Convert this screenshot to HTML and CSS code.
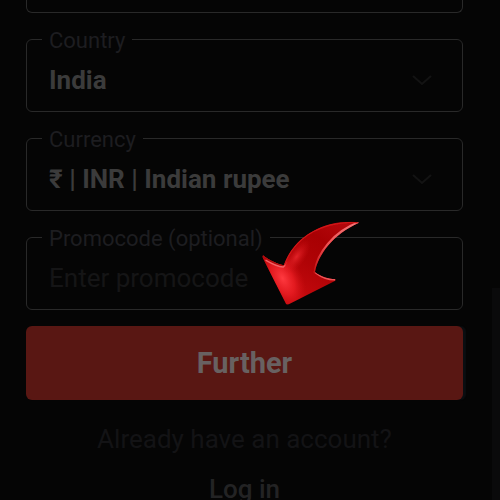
FILE: index.html
```html
<!DOCTYPE html>
<html lang="en">
<head>
<meta charset="utf-8">
<meta name="viewport" content="width=device-width, initial-scale=1">
<title>Registration</title>
<link rel="stylesheet" href="styles.css">
</head>
<body>
<main class="page">
  <form class="form">
    <div class="field-end"></div>
    <fieldset class="field">
      <legend><label for="country">Country</label></legend>
      <div class="control">
        <select id="country"><option>India</option></select>
        <svg class="chevron" viewBox="0 0 20 12" aria-hidden="true"><path d="M1 2l9 8 9-8"/></svg>
      </div>
    </fieldset>
    <fieldset class="field">
      <legend><label for="currency">Currency</label></legend>
      <div class="control">
        <select id="currency"><option>₹ | INR | Indian rupee</option></select>
        <svg class="chevron" viewBox="0 0 20 12" aria-hidden="true"><path d="M1 2l9 8 9-8"/></svg>
      </div>
    </fieldset>
    <div class="pointed">
      <fieldset class="field">
        <legend><label for="promo">Promocode (optional)</label></legend>
        <div class="control">
          <input id="promo" type="text" placeholder="Enter promocode">
        </div>
      </fieldset>
      <svg class="arrow" viewBox="0 0 360 330" aria-hidden="true">
        <defs>
          <linearGradient id="body" gradientUnits="userSpaceOnUse" x1="290" y1="40" x2="150" y2="270">
            <stop offset="0" stop-color="#b5080c"/>
            <stop offset=".3" stop-color="#a80003"/>
            <stop offset=".6" stop-color="#b00306"/>
            <stop offset="1" stop-color="#c60a0e"/>
          </linearGradient>
          <radialGradient id="glow" gradientUnits="userSpaceOnUse" cx="0" cy="0" r="1" gradientTransform="translate(98 205) rotate(62) scale(105 58)">
            <stop offset="0" stop-color="#ff3a40"/>
            <stop offset=".5" stop-color="#ee2026" stop-opacity=".75"/>
            <stop offset="1" stop-color="#d01015" stop-opacity="0"/>
          </radialGradient>
          <radialGradient id="sheen" gradientUnits="userSpaceOnUse" cx="0" cy="0" r="1" gradientTransform="translate(140 140) rotate(-55) scale(60 26)">
            <stop offset="0" stop-color="#ee2a2f" stop-opacity=".8"/>
            <stop offset="1" stop-color="#d01015" stop-opacity="0"/>
          </radialGradient>
          <linearGradient id="rim" gradientUnits="userSpaceOnUse" x1="325" y1="38" x2="195" y2="180">
            <stop offset="0" stop-color="#f27a7c"/>
            <stop offset=".6" stop-color="#ee5052"/>
            <stop offset="1" stop-color="#c51519"/>
          </linearGradient>
          <filter id="soft" x="-10%" y="-10%" width="120%" height="120%">
            <feGaussianBlur stdDeviation="1.6"/>
          </filter>
          <clipPath id="outline">
            <path d="M327 38C315 34 275 34 240 43C170 62 120 110 102 166C82 163 60 152 39 136L37 141L108 281Q111 285 116 283L256 212L256 207C235 207 212 200 195 186C203 135 250 72 327 38Z"/>
          </clipPath>
        </defs>
        <g clip-path="url(#outline)">
          <path fill="url(#body)" d="M0 0H360V330H0Z"/>
          <path fill="url(#glow)" d="M0 0H360V330H0Z"/>
          <path fill="url(#sheen)" d="M0 0H360V330H0Z"/>
          <g fill="none" stroke-linecap="round" filter="url(#soft)">
            <path stroke="url(#rim)" stroke-width="9" d="M325 39C252 66 202 130 195 186"/>
            <path stroke="#b0070a" stroke-width="9" d="M39 137C61 153 82 163 101 166"/>
            <path stroke="#f26265" stroke-width="4" d="M48 151C65 161 83 170 100 171Q104 170 107 158"/>
            <path stroke="#ee5558" stroke-width="5" d="M198 189C215 202 235 209 254 209"/>
            <path stroke="#cf1519" stroke-width="4" d="M104 164C124 108 170 64 240 45C275 37 300 36 321 38"/>
          </g>
        </g>
      </svg>
    </div>
    <button class="submit" type="button">Further</button>
  </form>
  <p class="hint">Already have an account?</p>
  <a class="login" href="#">Log in</a>
  <div class="scroll-thumb"></div>
</main>
</body>
</html>
```
FILE: styles.css
```css
* {
  box-sizing: border-box;
}

body {
  margin: 0;
  background: #050505;
  font-family: Roboto, "Noto Sans", sans-serif;
}

.page {
  position: relative;
  height: 100vh;
  overflow: hidden;
  padding: 0 37px 0 26px;
  text-align: center;
}

.form {
  display: flex;
  flex-direction: column;
  gap: 13px;
  text-align: left;
}

.field-end {
  height: 13px;
  border: 1px solid #292929;
  border-top: 0;
  border-radius: 0 0 6px 6px;
}

.field {
  min-width: 0;
  margin: 0;
  padding: 0 0 4px 15px;
  border: 1px solid #292929;
  border-radius: 6px;
}

.field legend {
  padding: 2px 7px 0;
  color: #1d1d20;
  font-size: 22px;
  line-height: 25px;
}

.control {
  display: flex;
  align-items: center;
  height: 54px;
  padding: 0 30px 0 7px;
}

.control select,
.control input {
  flex: 1;
  min-width: 0;
  height: 54px;
  margin: 0;
  padding: 0;
  border: 0;
  outline: 0;
  appearance: none;
  background: transparent;
  color: #3b3b3b;
  font-family: inherit;
  font-size: 26px;
  font-weight: 700;
}

.control input {
  font-weight: 400;
}

.control input::placeholder {
  color: #151516;
  opacity: 1;
}

.chevron {
  width: 20px;
  height: 12px;
  fill: none;
  stroke: #131313;
  stroke-width: 2;
}

.pointed {
  position: relative;
}

.arrow {
  position: absolute;
  top: -14px;
  left: 224px;
  width: 120px;
  height: 110px;
  pointer-events: none;
}

.submit {
  height: 74px;
  margin-top: 3px;
  border: 0;
  border-radius: 6px;
  background: #591713;
  box-shadow: 3px 0 1px #0b0e11;
  color: #686161;
  font-family: inherit;
  font-size: 29px;
  font-weight: 700;
}

.hint {
  margin: 23px 0 18px;
  color: #131315;
  font-size: 26px;
  line-height: 32px;
}

.login {
  color: #232324;
  font-size: 26px;
  font-weight: 500;
  line-height: 32px;
  text-decoration: none;
}

.scroll-thumb {
  position: absolute;
  top: 288px;
  right: 0;
  bottom: 0;
  width: 8px;
  background: #0a0a0b;
}
```
